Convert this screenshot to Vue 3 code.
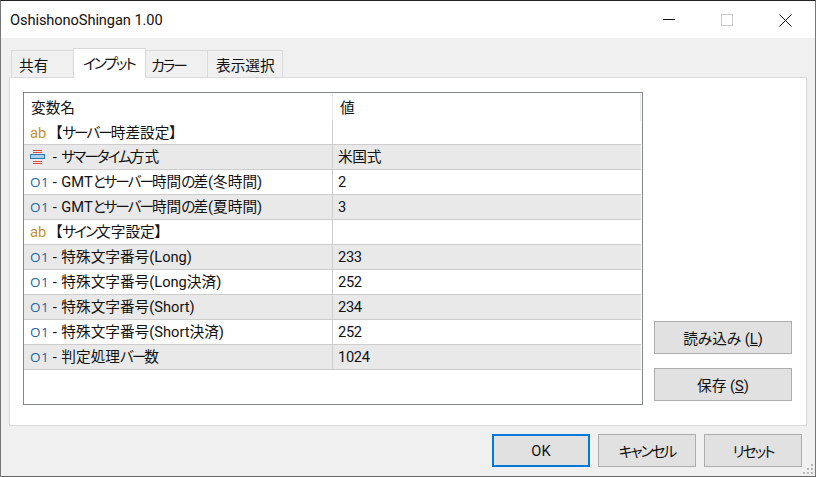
<script setup>
const rows = [
  { t: 'ab', n: '【サーバー時差設定】', v: '', g: false },
  { t: 'en', n: ' - サマータイム方式', v: '米国式', g: true },
  { t: '01', n: ' - GMTとサーバー時間の差(冬時間)', v: '2', g: false },
  { t: '01', n: ' - GMTとサーバー時間の差(夏時間)', v: '3', g: true },
  { t: 'ab', n: '【サイン文字設定】', v: '', g: false },
  { t: '01', n: ' - 特殊文字番号(Long)', v: '233', g: true },
  { t: '01', n: ' - 特殊文字番号(Long決済)', v: '252', g: false },
  { t: '01', n: ' - 特殊文字番号(Short)', v: '234', g: true },
  { t: '01', n: ' - 特殊文字番号(Short決済)', v: '252', g: false },
  { t: '01', n: ' - 判定処理バー数', v: '1024', g: true },
]
const tabs = ['共有', 'インプット', 'カラー', '表示選択']
const split = (s) =>
  s.split(/([\u3040-\u30ff]+)/).filter(Boolean).map((x) => ({ x, k: /^[\u3040-\u30ff]/.test(x) }))
</script>

<template>
  <div class="win">
    <div class="title">
      <span class="title-text">OshishonoShingan 1.00</span>
      <div class="controls">
        <svg width="13" height="13" viewBox="0 0 13 13"><path d="M0 5.5H12" stroke="#111" stroke-width="1" /></svg>
        <svg width="13" height="13" viewBox="0 0 13 13"><rect x="0.5" y="0.5" width="11" height="11" fill="none" stroke="#ccc" /></svg>
        <svg width="13" height="13" viewBox="0 0 13 13"><path d="M0.5 0.5L12.5 12.5M12.5 0.5L0.5 12.5" stroke="#111" stroke-width="1" /></svg>
      </div>
    </div>
    <div class="body">
      <div class="tabs">
        <div v-for="(t, i) in tabs" :key="t" class="tab" :class="['tab' + i, { active: i === 1 }]"><span v-for="(s, j) in split(t)" :key="j" :class="{ kana: s.k }">{{ s.x }}</span></div>
      </div>
      <div class="panel">
        <div class="table">
          <div class="row head">
            <div class="c1 hc">変数名</div>
            <div class="c2">値</div>
          </div>
          <div v-for="(r, i) in rows" :key="i" class="row" :class="{ grey: r.g }">
            <div class="c1">
              <span class="icon">
                <span v-if="r.t === 'ab'" class="ab">ab</span>
                <span v-else-if="r.t === '01'" class="num">O1</span>
                <svg v-else width="15" height="16" viewBox="0 0 15 16">
                  <path d="M3 1.5H12M3 3.5H12M3 12.5H12M3 14.5H12" stroke="#e8453f" stroke-width="1" fill="none" />
                  <rect x="0.5" y="5.5" width="14" height="4" fill="#a9cfe9" stroke="#2b78b8" />
                </svg>
              </span>
              <span class="name" :class="{ bracket: r.t === 'ab' }"><span v-for="(s, j) in split(r.n)" :key="j" :class="{ kana: s.k }">{{ s.x }}</span></span>
            </div>
            <div class="c2">{{ r.v }}</div>
          </div>
        </div>
        <div class="side">
          <button class="btn side-btn">読み込み (<u>L</u>)</button>
          <button class="btn side-btn">保存 (<u>S</u>)</button>
        </div>
      </div>
      <div class="footer">
        <button class="btn foot-btn ok">OK</button>
        <button class="btn foot-btn"><span class="kana">キャンセル</span></button>
        <button class="btn foot-btn"><span class="kana">リセット</span></button>
      </div>
      <svg class="grip" width="12" height="12" viewBox="0 0 12 12" fill="#b8b8b8">
        <rect x="8" y="0" width="2" height="2" /><rect x="4" y="4" width="2" height="2" /><rect x="8" y="4" width="2" height="2" />
        <rect x="0" y="8" width="2" height="2" /><rect x="4" y="8" width="2" height="2" /><rect x="8" y="8" width="2" height="2" />
      </svg>
    </div>
  </div>
</template>

<style>
html, body { margin: 0; background: #f0f0f0; overflow: hidden; }
</style>

<style scoped>
.win {
  width: 816px;
  height: 477px;
  box-sizing: border-box;
  border-top: 1px solid #222;
  border-left: 1px solid #777;
  border-right: 1px solid #777;
  border-bottom: 1px solid #666;
  background: #f0f0f0;
  display: flex;
  flex-direction: column;
  font-family: Roboto, "Noto Sans CJK JP", sans-serif;
  font-feature-settings: "palt";
  font-size: 14.67px;
  color: #111;
}
.kana { letter-spacing: -2px; }
.title {
  height: 37px;
  background: #fff;
  display: flex;
  align-items: center;
  justify-content: space-between;
  flex: none;
}
.title-text { padding-left: 9px; letter-spacing: -0.1px; }
.controls { display: flex; gap: 45px; padding-right: 23px; padding-top: 1px; }
.controls svg { display: block; }
.body { flex: 1; display: flex; flex-direction: column; position: relative; padding: 10px 8px 0 8px; }
.tabs { display: flex; height: 29px; align-items: flex-end; padding-left: 2px; position: relative; z-index: 1; }
.tab {
  box-sizing: border-box;
  height: 27px;
  border: 1px solid #d9d9d9;
  border-bottom: none;
  margin-left: -1px;
  display: flex;
  align-items: center;
  background: #f0f0f0;
  padding-left: 7px;
  padding-top: 1px;
}
.tab0 { width: 63px; margin-left: 0; }
.tab1 { width: 73px; padding-left: 9px; }
.tab2 { width: 63px; padding-left: 5px; }
.tab3 { width: 76px; padding-left: 8px; }
.tab.active {
  height: 30px;
  background: #fff;
  margin-bottom: -1px;
  padding-top: 0;
  padding-bottom: 3px;
}
.panel {
  width: 798px;
  height: 349px;
  box-sizing: border-box;
  background: #fff;
  border: 1px solid #d9d9d9;
  padding: 14px 14px 0 13px;
  display: flex;
  justify-content: space-between;
}
.table {
  width: 620px;
  height: 313px;
  box-sizing: border-box;
  border: 1px solid #82878f;
  background: #fff;
  padding-right: 1px;
  flex: none;
}
.row {
  display: flex;
  height: 25px;
  box-sizing: border-box;
  line-height: 24px;
  border-bottom: 1px solid #cdcdcd;
}
.row.head { height: 28px; border-bottom: none; line-height: 28px; padding-top: 1px; }
.row:nth-child(2) { height: 24px; }
.row.grey { background: #e9e9e9; }
.c1 { width: 309px; box-sizing: border-box; flex: none; display: flex; align-items: center; white-space: pre; border-right: 1px solid #cdcdcd; padding-left: 6px; }
.hc { padding-left: 7px; border-right-color: #e6e6e6; }
.c2 { flex: 1; padding-left: 5px; letter-spacing: -0.3px; }
.head .c2 { padding-left: 7px; border-right: 1px solid #e6e6e6; letter-spacing: 0; }
.icon { width: 17px; flex: none; display: flex; align-items: center; }
.icon svg { display: block; margin-left: 0; }
.ab { color: #c4912f; }
.num { color: #1a66a8; letter-spacing: 0.4px; font-size: 13.5px; font-family: "Open Sans", sans-serif; }
.name { margin-left: 1px; word-spacing: 1px; }
.name.bracket { margin-left: 8px; }
.side {
  display: flex;
  flex-direction: column;
  gap: 14px;
  margin-top: 229px;
}
.btn {
  box-sizing: border-box;
  background: #e1e1e1;
  border: 1px solid #adadad;
  font: inherit;
  color: #111;
  padding: 0;
}
.side-btn { width: 138px; height: 33px; }
.footer {
  display: flex;
  gap: 8px;
  justify-content: flex-end;
  padding-top: 8px;
  padding-right: 5px;
}
.foot-btn { width: 98px; height: 33px; }
.ok { border: 2px solid #0078d7; }
.grip { position: absolute; right: 0; bottom: 0; }
</style>
